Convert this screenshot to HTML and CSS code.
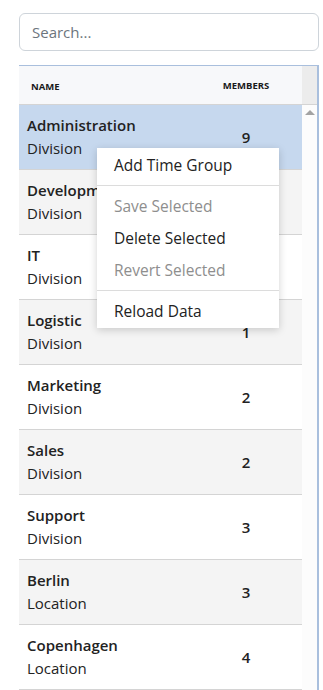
FILE: index.html
```html
<!DOCTYPE html>
<html>
<head>
<meta charset="utf-8">
<link rel="stylesheet" href="styles.css">
</head>
<body>
<div class="page">
  <div class="search"><input type="text" placeholder="Search..."></div>
  <div class="grid">
    <div class="grid-head">
      <div class="cols">
        <div class="col-name">NAME</div>
        <div class="col-members">MEMBERS</div>
      </div>
      <div class="scroll-head"></div>
    </div>
    <div class="grid-body">
      <div class="rows">
        <div class="row selected"><div class="cell-name"><b>Administration</b><span>Division</span></div><div class="cell-members">9</div></div>
        <div class="row alt"><div class="cell-name"><b>Development</b><span>Division</span></div><div class="cell-members">4</div></div>
        <div class="row"><div class="cell-name"><b>IT</b><span>Division</span></div><div class="cell-members">2</div></div>
        <div class="row alt"><div class="cell-name"><b>Logistic</b><span>Division</span></div><div class="cell-members">1</div></div>
        <div class="row"><div class="cell-name"><b>Marketing</b><span>Division</span></div><div class="cell-members">2</div></div>
        <div class="row alt"><div class="cell-name"><b>Sales</b><span>Division</span></div><div class="cell-members">2</div></div>
        <div class="row"><div class="cell-name"><b>Support</b><span>Division</span></div><div class="cell-members">3</div></div>
        <div class="row alt"><div class="cell-name"><b>Berlin</b><span>Location</span></div><div class="cell-members">3</div></div>
        <div class="row"><div class="cell-name"><b>Copenhagen</b><span>Location</span></div><div class="cell-members">4</div></div>
      </div>
      <div class="scroll-track"><div class="arrow-up"></div></div>
    </div>
  </div>
  <ul class="menu">
    <li>Add Time Group</li>
    <li class="sep"></li>
    <li class="disabled">Save Selected</li>
    <li>Delete Selected</li>
    <li class="disabled">Revert Selected</li>
    <li class="sep"></li>
    <li>Reload Data</li>
  </ul>
</div>
</body>
</html>
```
FILE: styles.css
```css
html, body {
  margin: 0;
  padding: 0;
  background: #fff;
  height: 690px;
  overflow: hidden;
}
body {
  font-family: "Open Sans", "Noto Sans", sans-serif;
  color: #212529;
}
.page {
  position: relative;
  padding: 13px 4px 0 19px;
}
.search input {
  box-sizing: border-box;
  width: 300px;
  height: 38px;
  border: 1px solid #ced4da;
  border-radius: 6px;
  padding: 0 12px;
  font-family: inherit;
  font-size: 15px;
  color: #495057;
  outline: none;
}
.search input::placeholder {
  color: #6c757d;
}
.grid {
  margin-top: 14px;
  width: 298px;
  border-top: 1px solid #a9bfdd;
  border-right: 2px solid #a9bfdd;
}
.grid-head {
  display: flex;
  height: 38px;
  border-bottom: 1px solid #d4d4d4;
}
.cols {
  flex: 1;
  display: flex;
  align-items: center;
  background: #f7f8fa;
  font-size: 9.5px;
  font-weight: 700;
  color: #1a1a1a;
}
.col-name {
  flex: 1;
  padding-left: 12px;
  padding-top: 3px;
}
.col-members {
  width: 112px;
  text-align: center;
}
.scroll-head {
  width: 15px;
  background: #ececec;
}
.grid-body {
  display: flex;
}
.rows {
  flex: 1;
}
.row {
  display: flex;
  align-items: center;
  height: 64px;
  border-bottom: 1px solid #d4d4d4;
  background: #fff;
}
.row.alt {
  background: #f4f4f4;
}
.row.selected {
  background: #c6d8ee;
}
.cell-name {
  flex: 1;
  padding-left: 8px;
  display: flex;
  flex-direction: column;
  font-size: 15px;
  line-height: 23px;
  color: #222;
  overflow: hidden;
  white-space: nowrap;
}
.cell-name b {
  font-weight: 600;
  font-size: 15px;
}
.cell-members {
  width: 112px;
  text-align: center;
  font-size: 15px;
  font-weight: 600;
  color: #222;
}
.scroll-track {
  width: 15px;
  background: #fcfcfc;
  display: flex;
  justify-content: center;
}
.arrow-up {
  margin-top: 5px;
  width: 0;
  height: 0;
  border-left: 5px solid transparent;
  border-right: 5px solid transparent;
  border-bottom: 5px solid #a3a3a3;
}
.menu {
  position: absolute;
  left: 97px;
  top: 148px;
  width: 182px;
  margin: 0;
  padding: 1px 0;
  list-style: none;
  background: #fff;
  box-shadow: 0 2px 8px rgba(0, 0, 0, 0.18);
  font-size: 15.5px;
}
.menu li {
  height: 32px;
  line-height: 32px;
  padding-left: 17px;
  color: #222;
  white-space: nowrap;
}
.menu li.disabled {
  color: #8e8e8e;
}
.menu li.sep {
  height: 1px;
  margin: 4px 0;
  padding: 0;
  background: #dcdcdc;
}
```
